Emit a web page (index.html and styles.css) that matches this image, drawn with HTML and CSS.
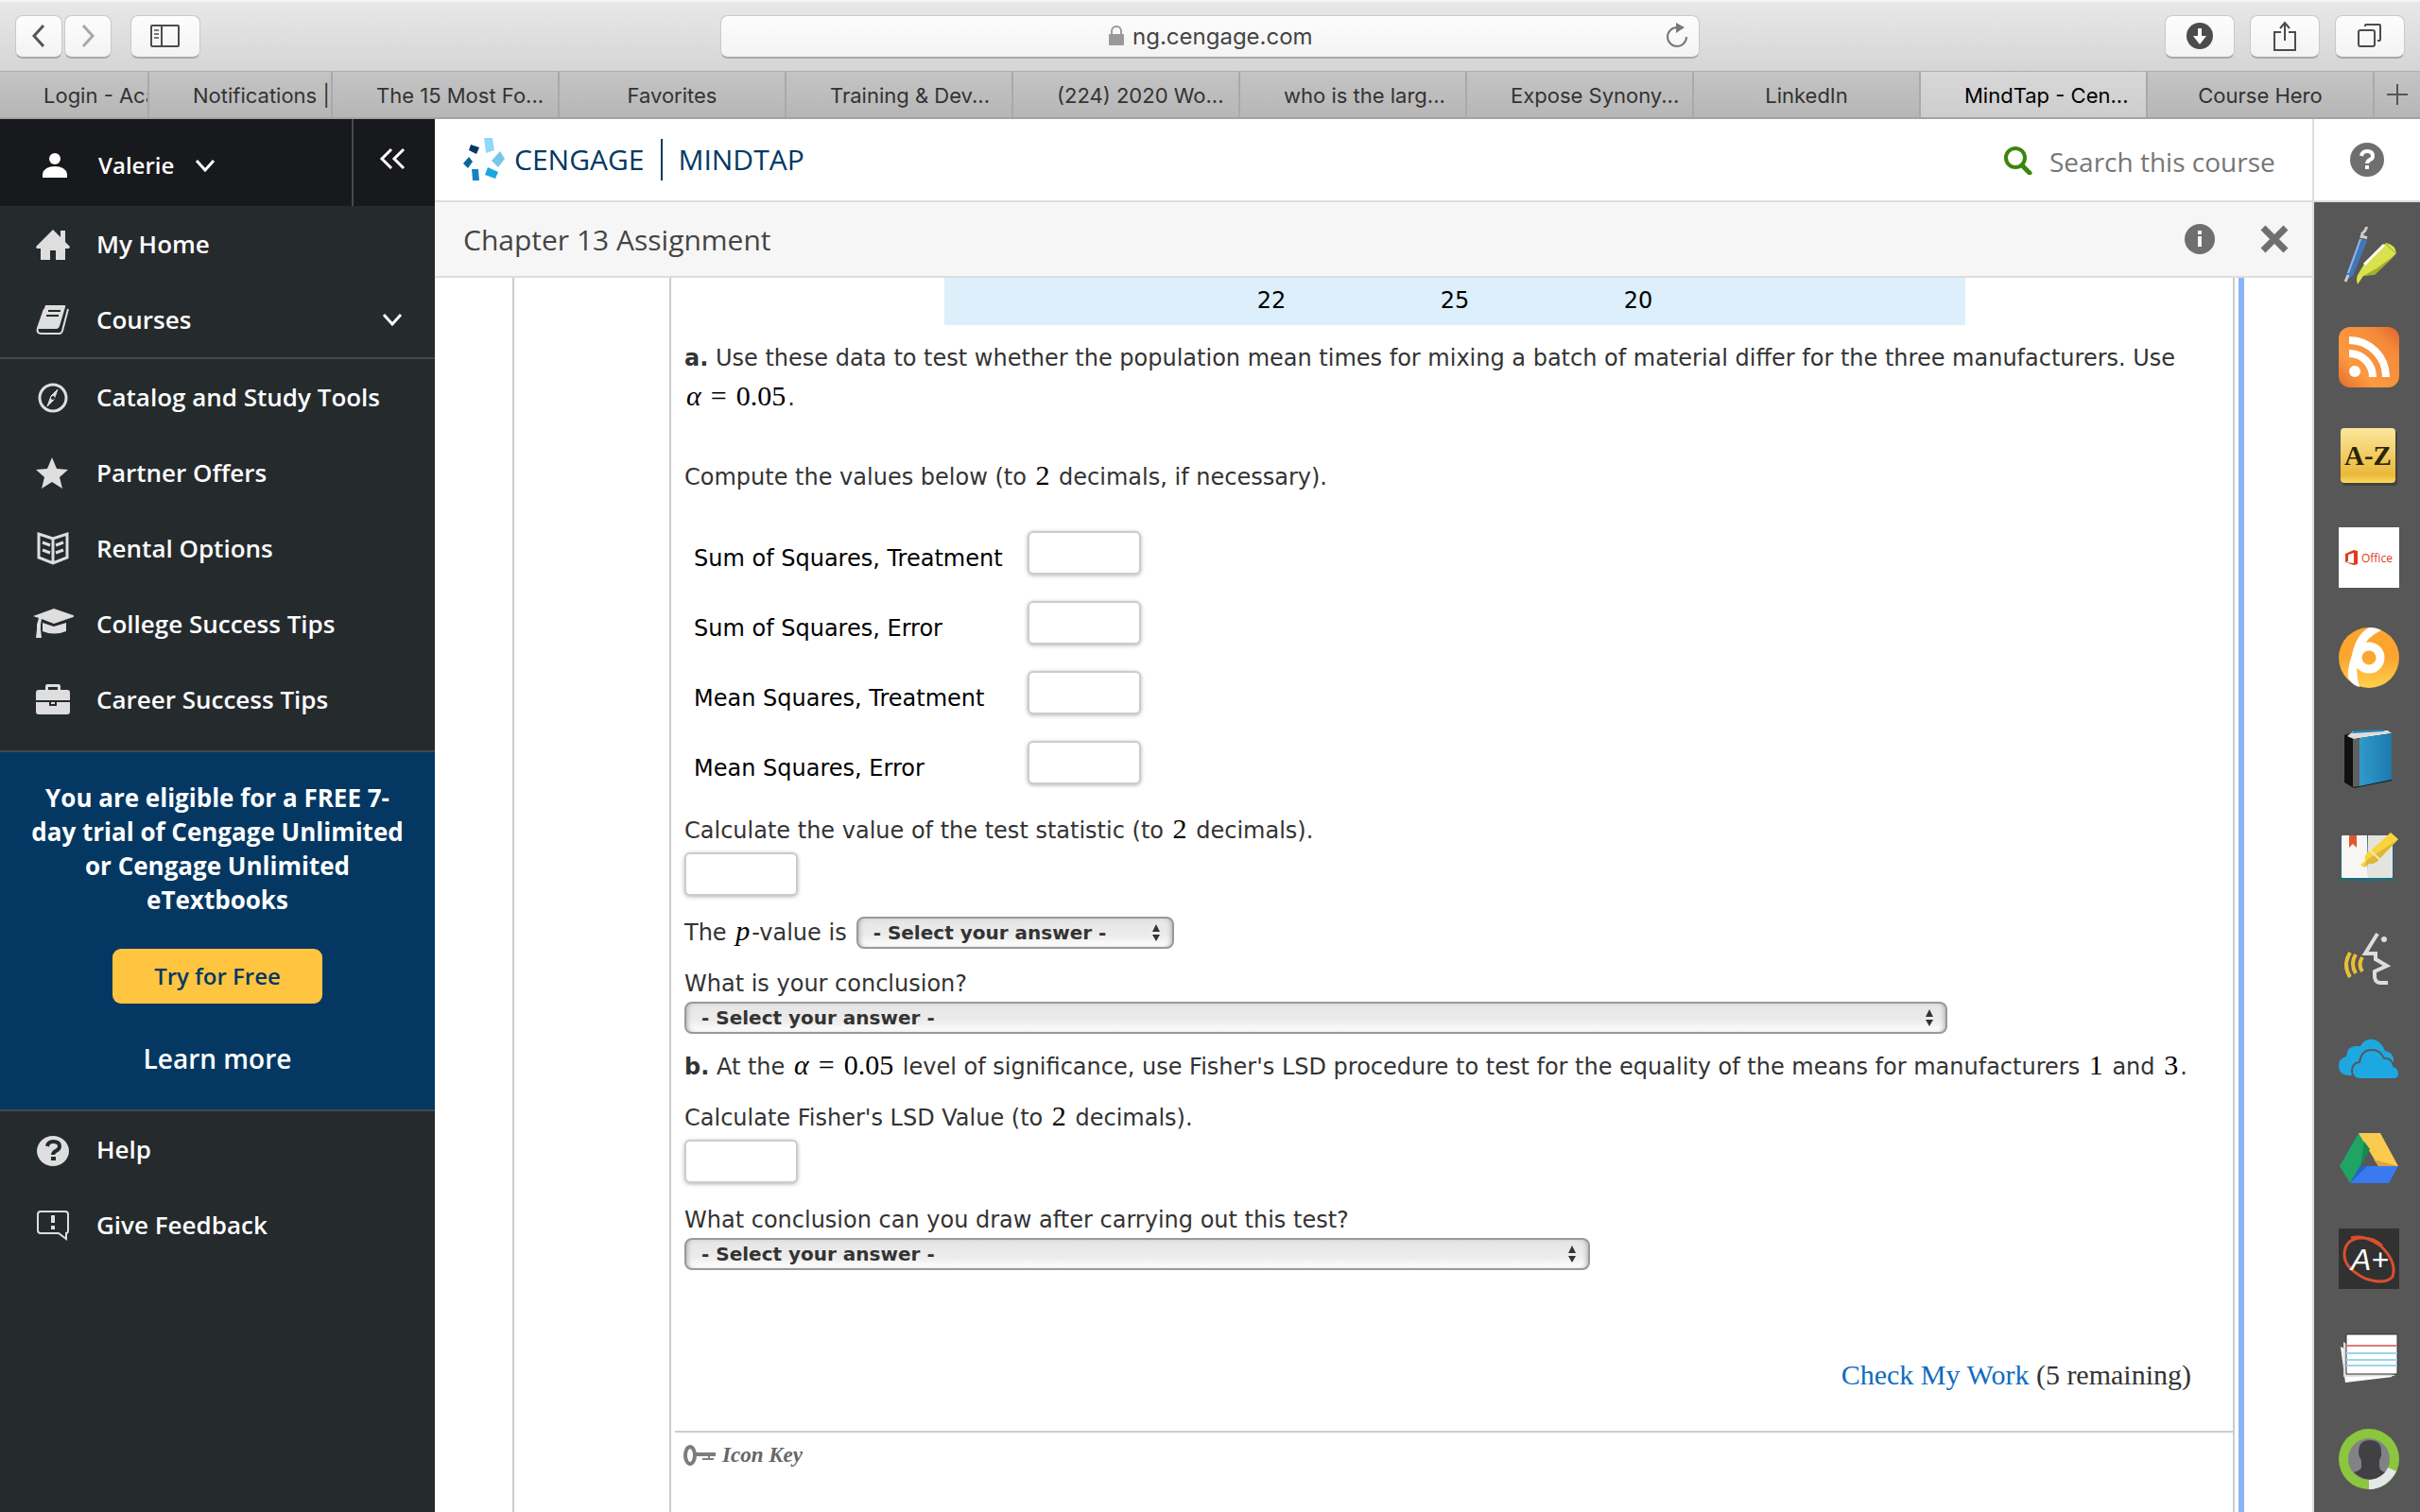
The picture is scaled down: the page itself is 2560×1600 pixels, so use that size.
FILE: index.html
```html
<!DOCTYPE html>
<html lang="en">
<head>
<meta charset="utf-8">
<title>MindTap - Cengage Learning</title>
<meta name="viewport" content="width=device-width, initial-scale=1">
<link rel="stylesheet" href="styles.css">
</head>
<body>
<div class="toolbar">
  <div class="tool-group">
    <button class="tool narrow" type="button" aria-label="Back"><svg width="18" height="28" viewBox="0 0 18 28"><path d="M14 3 4 14l10 11" fill="none" stroke="#555" stroke-width="3"/></svg></button>
    <button class="tool narrow" type="button" aria-label="Forward"><svg width="18" height="28" viewBox="0 0 18 28"><path d="M4 3l10 11L4 25" fill="none" stroke="#a8a8a8" stroke-width="3"/></svg></button>
    <button class="tool spaced" type="button" aria-label="Show sidebar"><svg width="32" height="26" viewBox="0 0 32 26"><rect x="1" y="2" width="29" height="22" rx="1" fill="none" stroke="#4c4c4c" stroke-width="2"/><path d="M12 2v22" stroke="#4c4c4c" stroke-width="2"/><path d="M4 7h5M4 11h5M4 15h5" stroke="#777" stroke-width="2"/></svg></button>
  </div>
  <form class="address">
    <svg width="18" height="22" viewBox="0 0 18 22"><path d="M4 10V6a5 5 0 0 1 10 0v4" fill="none" stroke="#999" stroke-width="2"/><rect x="1" y="9" width="16" height="12" rx="1" fill="#999"/></svg>
    <input class="url" type="text" value="ng.cengage.com" aria-label="Address">
    <button class="reload" type="button" aria-label="Reload"><svg width="26" height="28" viewBox="0 0 26 28"><path d="M13 5A10 10 0 1 0 23 15" fill="none" stroke="#777" stroke-width="2"/><path d="M12 0v11l9-6z" fill="#777"/></svg></button>
  </form>
  <div class="tool-group end">
    <button class="tool" type="button" aria-label="Downloads"><svg width="30" height="30" viewBox="0 0 30 30"><circle cx="15" cy="15" r="14" fill="#4c4c4c"/><path d="M13 7h4v8h5l-7 9-7-9h5z" fill="#fff"/></svg></button>
    <button class="tool" type="button" aria-label="Share"><svg width="26" height="34" viewBox="0 0 26 34"><path d="M9 13H2v19h22V13h-7M13 22V4M8 9l5-6 5 6" fill="none" stroke="#4c4c4c" stroke-width="2"/></svg></button>
    <button class="tool" type="button" aria-label="Show all tabs"><svg width="28" height="28" viewBox="0 0 28 28"><rect x="2" y="8" width="17" height="17" rx="2" fill="none" stroke="#4c4c4c" stroke-width="2"/><path d="M9 4V3q0-1 1-1h14q1 0 1 1v15q0 1-1 1h-2" fill="none" stroke="#4c4c4c" stroke-width="2"/></svg></button>
  </div>
</div>
<nav class="tabs" aria-label="Browser tabs">
  <a class="tab" href="#">Login - Aca</a>
  <a class="tab" href="#">Notifications |</a>
  <a class="tab" href="#">The 15 Most Fo...</a>
  <a class="tab centered" href="#">Favorites</a>
  <a class="tab" href="#">Training &amp; Dev...</a>
  <a class="tab" href="#">(224) 2020 Wo...</a>
  <a class="tab" href="#">who is the larg...</a>
  <a class="tab" href="#">Expose Synony...</a>
  <a class="tab centered" href="#">LinkedIn</a>
  <a class="tab active" href="#">MindTap - Cen...</a>
  <a class="tab centered" href="#">Course Hero</a>
  <button class="new-tab" type="button" aria-label="New tab"><svg width="24" height="24" viewBox="0 0 24 24"><path d="M12 1v22M1 12h22" stroke="#555" stroke-width="2"/></svg></button>
</nav>

<div class="app">
  <aside class="sidebar">
    <div class="user-bar">
      <button class="user" type="button">
        <svg class="user-icon" width="28" height="28" viewBox="0 0 28 28" fill="#fff"><circle cx="14" cy="7" r="6"/><path d="M1 27v-4q2-8 13-8t13 8v4z"/></svg>
        Valerie
        <svg width="22" height="14" viewBox="0 0 22 14"><path d="M2 2l9 10 9-10" fill="none" stroke="#fff" stroke-width="3"/></svg>
      </button>
      <button class="collapse" type="button" aria-label="Collapse menu"><svg width="28" height="24" viewBox="0 0 28 24"><path d="M13 2 3 12l10 10M26 2 16 12l10 10" fill="none" stroke="#fff" stroke-width="3"/></svg></button>
    </div>
    <nav class="menu menu-top">
      <a class="item" href="#"><svg class="icon" viewBox="0 0 44 40" fill="#dedede"><path d="M22 5 4 23l1 2h4v12h10V27h6v10h10V25h4l1-2-5-5V6h-5v7z"/></svg>My Home</a>
      <a class="item" href="#"><svg class="icon" viewBox="0 0 44 40"><path d="M14 5h20q2 0 1 2l-6 20q-1 3-3 3H6z" fill="#dedede"/><path d="M38 9l-6 23q-1 3-3 3H10q-6 0-4-6l7-20" fill="none" stroke="#dedede" stroke-width="2"/><path d="M17 11h13M15 16h13" stroke="#252a2d" stroke-width="2"/></svg>Courses<svg class="chev" width="22" height="14" viewBox="0 0 22 14"><path d="M2 2l9 10 9-10" fill="none" stroke="#fff" stroke-width="3"/></svg></a>
    </nav>
    <nav class="menu">
      <a class="item" href="#"><svg class="icon" viewBox="0 0 44 40"><circle cx="22" cy="21" r="14" fill="none" stroke="#dedede" stroke-width="3"/><path d="M27 12 20 19l-4 11 7-7z" fill="#dedede" stroke="#dedede"/><circle cx="22" cy="21" r="2" fill="#252a2d"/></svg>Catalog and Study Tools</a>
      <a class="item" href="#"><svg class="icon" viewBox="0 0 44 40" fill="#dedede"><path d="M21 4l5 12 12 1-9 8 3 12-11-7-11 7 3-12-9-8 12-1z"/></svg>Partner Offers</a>
      <a class="item" href="#"><svg class="icon" viewBox="0 0 44 40" fill="none" stroke="#dedede" stroke-width="3"><path d="M22 10 7 5v25l15 6 15-6V5zM22 10v26M11 14l8 3M11 22l8 3M33 14l-8 3M33 22l-8 3"/></svg>Rental Options</a>
      <a class="item" href="#"><svg class="icon" viewBox="0 0 44 40" fill="#dedede"><path d="M23 4 1 12l6 2-2 7v5l-1 9h6l-1-9V21l1-6 13 5 23-8zM11 19v9q12 5 25 0v-9l-13 4z"/></svg>College Success Tips</a>
      <a class="item" href="#"><svg class="icon" viewBox="0 0 44 40" fill="#dedede"><path d="M14 10V6q0-2 2-2h12q2 0 2 2v4h7q3 0 3 3v8H4v-8q0-3 3-3zm3 0h10V7H17zM4 23h14v4h8v-4h14v10q0 3-3 3H7q-3 0-3-3z"/><path d="M20 23h4v2h-4z"/></svg>Career Success Tips</a>
    </nav>
    <section class="promo">
      <p class="promo-text">You are eligible for a FREE 7-day trial of Cengage Unlimited or Cengage Unlimited eTextbooks</p>
      <button class="try" type="button">Try for Free</button>
      <a class="learn" href="#">Learn more</a>
    </section>
    <nav class="menu menu-bottom">
      <a class="item" href="#"><svg class="icon" viewBox="0 0 44 40"><ellipse cx="22" cy="22" rx="17" ry="16" fill="#dedede"/><path d="M16 17q1-5 6-5 7 0 7 5 0 3-4 5-3 2-3 4" fill="none" stroke="#252a2d" stroke-width="4"/><path d="M20 28h5v4h-5z" fill="#252a2d"/></svg>Help</a>
      <a class="item" href="#"><svg class="icon" viewBox="0 0 44 40"><path d="M9 6h26q3 0 3 3v17q0 3-2 3v6l-8-6H9q-3 0-3-3V9q0-3 3-3z" fill="none" stroke="#dedede" stroke-width="2"/><path d="M20 10h4v8h-4zM20 21h4v4h-4z" fill="#dedede"/></svg>Give Feedback</a>
    </nav>
  </aside>

  <main class="main">
    <header class="brand-bar">
      <a class="brand" href="#">
        <svg width="46" height="46" viewBox="0 0 46 46"><path d="M22 0h9l2 13-9 3z" fill="#8fd8f8"/><path d="m39 14 5 8-7 9-7-7z" fill="#79c6e8"/><path d="m26 31 11 5-3 7-11-4z" fill="#1ba8e0"/><path d="M9 33h7l1 12h-7z" fill="#1a80c4"/><path d="m6 20 4 5-5 7-5-5z" fill="#0a6699"/><path d="m8 7 9 3-3 7-8-4z" fill="#003865"/></svg>
        <span>CENGAGE</span><span class="brand-sub">MINDTAP</span>
      </a>
      <label class="search">
        <svg width="32" height="32" viewBox="0 0 32 32" fill="none" stroke="#3b860b"><circle cx="14" cy="14" r="10" stroke-width="4"/><path d="m21 22 8 8" stroke-width="5" stroke-linecap="round"/></svg>
        <input class="search-input" type="text" placeholder="Search this course" aria-label="Search this course">
      </label>
    </header>
    <header class="title-bar">
      <h1 class="title">Chapter 13 Assignment</h1>
      <button class="plain" type="button" aria-label="Information"><svg width="34" height="34" viewBox="0 0 34 34"><circle cx="17" cy="17" r="16" fill="#6f6f6f"/><path d="M15 8h4v4h-4zM15 14h4v11h-4z" fill="#f6f6f6"/></svg></button>
      <button class="plain" type="button" aria-label="Close"><svg width="32" height="32" viewBox="0 0 32 32"><path d="m4 4 24 24M28 4 4 28" stroke="#6f6f6f" stroke-width="7"/></svg></button>
    </header>
    <div class="pane">
      <div class="sheet">
        <article class="question">
          <table class="data"><tbody><tr><td></td><td>22</td><td>25</td><td>20</td><td></td></tr></tbody></table>
          <p><b>a.</b> Use these data to test whether the population mean times for mixing a batch of material differ for the three manufacturers. Use <span class="math"><i>α</i><span class="eq">=</span>0.05</span>.</p>
          <p class="spaced-par">Compute the values below (to <span class="math">2</span> decimals, if necessary).</p>
          <div class="answers">
            <label for="sst">Sum of Squares, Treatment</label><input class="box" id="sst" type="text">
            <label for="sse">Sum of Squares, Error</label><input class="box" id="sse" type="text">
            <label for="mst">Mean Squares, Treatment</label><input class="box" id="mst" type="text">
            <label for="mse">Mean Squares, Error</label><input class="box" id="mse" type="text">
          </div>
          <div class="field"><label for="stat">Calculate the value of the test statistic (to <span class="math">2</span> decimals).</label><input class="box" id="stat" type="text"></div>
          <div class="inline-field"><label for="pval">The <span class="math"><i>p</i></span>-value is</label><select class="pick short" id="pval"><option>- Select your answer -</option></select></div>
          <div class="field"><label for="concl">What is your conclusion?</label><select class="pick long" id="concl"><option>- Select your answer -</option></select></div>
          <p class="part-b"><b>b.</b> At the <span class="math"><i>α</i><span class="eq">=</span>0.05</span> level of significance, use Fisher's LSD procedure to test for the equality of the means for manufacturers <span class="math">1</span> and <span class="math">3</span>.</p>
          <div class="field"><label for="lsd">Calculate Fisher's LSD Value (to <span class="math">2</span> decimals).</label><input class="box" id="lsd" type="text"></div>
          <div class="field"><label for="after">What conclusion can you draw after carrying out this test?</label><select class="pick medium" id="after"><option>- Select your answer -</option></select></div>
          <p class="check"><a href="#">Check My Work</a> (5 remaining)</p>
          <footer class="key"><svg width="36" height="24" viewBox="0 0 36 24" fill="none" stroke="#7d7d7d"><ellipse cx="8" cy="12" rx="5" ry="9" stroke-width="4"/><path d="M13 11h22" stroke-width="4"/><path d="M28 11v6M21 16h12" stroke-width="2"/></svg>Icon Key</footer>
        </article>
      </div>
    </div>
  </main>

  <aside class="rail">
    <button class="help" type="button" aria-label="Help"><svg width="38" height="38" viewBox="0 0 38 38"><circle cx="19" cy="19" r="18" fill="#6f6f6f"/><path d="M13 15q1-5 6-5 6 0 6 5 0 3-3 4-3 2-3 4" fill="none" stroke="#fff" stroke-width="4"/><path d="M17 25h4v4h-4z" fill="#fff"/></svg></button>
    <nav class="apps">
      <a href="#" aria-label="Highlights"><svg class="app-icon" viewBox="0 0 64 64"><path d="m23 12 7 3-15 37-5 3-2-5z" fill="#3f78b8"/><path d="m23 13-13 36" stroke="#92b8e0" stroke-width="2"/><path d="m7 58 3-7M24 12l1-5 3-3 2-5M23 9l7 3" stroke="#ccc" stroke-width="3"/><path d="M50 17q10 2 11 11L38 50l-12 2-6 9q-2-6 0-10l6-10z" fill="#d8e24c"/><path d="M61 29 38 51l-12 1 14-8z" fill="#a5ad2f"/><path d="m27 40 21-21" stroke="#fff" stroke-width="3"/><path d="M50 18q5 6 11 10" fill="none" stroke="#98a02e" stroke-width="1"/></svg></a>
      <a href="#" aria-label="RSS"><svg class="app-icon" viewBox="0 0 64 64"><defs><linearGradient id="g1" x1="0" y1="1" x2="1" y2="0"><stop offset="0" stop-color="#e36a2c"/><stop offset=".3" stop-color="#fb9a40"/><stop offset=".75" stop-color="#f58b3a"/><stop offset="1" stop-color="#dd6230"/></linearGradient></defs><rect width="64" height="64" rx="12" fill="url(#g1)"/><circle cx="17" cy="47" r="6" fill="#fff"/><path d="M11 28a25 25 0 0 1 25 25M11 14a39 39 0 0 1 39 39" fill="none" stroke="#fff" stroke-width="8"/></svg></a>
      <a href="#" aria-label="Glossary"><svg class="app-icon" viewBox="0 0 64 64"><defs><linearGradient id="g2" x1="0" y1="0" x2="0" y2="1"><stop offset="0" stop-color="#fbe79c"/><stop offset=".7" stop-color="#eec14a"/><stop offset=".85" stop-color="#eab93c"/><stop offset="1" stop-color="#fbd95a"/></linearGradient></defs><rect x="4" y="4" width="58" height="58" rx="4" fill="#333" opacity=".6"/><rect x="2" y="1" width="58" height="58" rx="4" fill="url(#g2)"/><text class="az" x="31" y="40" text-anchor="middle">A-Z</text></svg></a>
      <a href="#" aria-label="Office"><svg class="app-icon" viewBox="0 0 64 64"><path d="M0 0h64v64H0z" fill="#fff"/><path d="m7 28 9-4 4 1v14l-4 1-9-3 9 1V27l-6 2v7l-3 1z" fill="#e03c1a"/><text class="office" x="24" y="37">Office</text></svg></a>
      <a href="#" aria-label="Pathbrite"><svg class="app-icon" viewBox="0 0 64 64"><defs><linearGradient id="g3" x1="0" y1="0" x2="0" y2="1"><stop offset=".5" stop-color="#fba52f"/><stop offset="1" stop-color="#ffd04c"/></linearGradient></defs><circle cx="32" cy="32" r="32" fill="url(#g3)"/><path d="M32 0q8 0 13 3Q29 10 23 26q-7 20-1 37-8-2-12-10-1-10 4-24Q18 8 32 0z" fill="#fff"/><circle cx="32" cy="32" r="12" fill="none" stroke="#fff" stroke-width="9"/></svg></a>
      <a href="#" aria-label="Book"><svg class="app-icon" viewBox="0 0 64 64"><defs><linearGradient id="g4"><stop offset="0" stop-color="#2f9bcb"/><stop offset="1" stop-color="#1d79ad"/></linearGradient></defs><path d="m6 8 12-4 34-1 4 4v49l-40 8L6 58z" fill="#111"/><path d="m9 9 6-5 37-1 4 3-40 6z" fill="#ddd"/><path d="m13 6 5-3 30-1v2z" fill="#2380b0"/><path d="M15 12h7v50l-7 1z" fill="#606060"/><path d="m22 11 34-5v49l-34 7z" fill="url(#g4)"/></svg></a>
      <a href="#" aria-label="Notes"><svg class="app-icon" viewBox="0 0 64 64"><path d="M2 9h56v47H34l-3 3-3-3H2z" fill="#236a78"/><path d="M4 8h26l1 45H4q-1 0-1-1V9z" fill="#f8f6f3"/><path d="M31 8h26v44q0 1-1 1H31z" fill="#e3e4de"/><path d="M11 8h8v13l-4-4-4 4z" fill="#e0572f"/><path d="m55 5 8 7-20 21q-4 6-11 5l-5 4-4-3 5-4q-2-8 6-11z" fill="#fad43d"/><path d="m63 12-20 21q-4 6-11 5l-5 4 3-8z" fill="#dcb73a"/><path d="m32 23 12 11" stroke="#f3e9b0" stroke-width="2"/></svg></a>
      <a href="#" aria-label="Read aloud"><svg class="app-icon" viewBox="0 0 64 64" fill="none" stroke-width="4"><path d="M41 6 28 27h11v6l12 7-13 6v6q1 6 6 6h8" stroke="#ddd"/><circle cx="48" cy="12" r="3" fill="#ddd" stroke="none"/><path d="M12 26q-8 13 0 26M18 28q-6 10 0 20M25 31q-5 8 0 15" stroke="#e9bf35" stroke-width="4"/></svg></a>
      <a href="#" aria-label="OneDrive"><svg class="app-icon" viewBox="0 0 64 64"><path d="M10 50q-10-1-10-10 0-8 8-10 1-11 10-11h5Q28 10 37 12q8 2 12 12 10 2 9 12l-20 14z" fill="#1ea8e1"/><path d="M22 54q-8-1-8-9 0-8 8-9 2-13 13-13 9 0 13 9 8-1 10 8 6 2 6 8 0 6-6 6z" fill="#1ea8e1" stroke="#575757" stroke-width="2"/></svg></a>
      <a href="#" aria-label="Drive"><svg class="app-icon" viewBox="0 0 64 64"><path d="M21 5 1 40l11 18 21-36z" fill="#1fa463"/><path d="M21 5h23l19 35H42z" fill="#fbcb50"/><path d="M23 40h40L53 58H12z" fill="#3a7af0"/><path d="m23 40 10-18-6-8" fill="#168a4f"/><path d="m63 40-26-7 5 7z" fill="#dba637"/><path d="m12 58 18-18h-7z" fill="#2561c7"/></svg></a>
      <a href="#" aria-label="Grades"><svg class="app-icon" viewBox="0 0 64 64"><path d="M0 0h64v64H0z" fill="#313131"/><path d="M13 10Q27 6 44 18q18 17 13 33-8 9-29 2Q6 42 6 28q0-16 16-18 14-1 24 8" fill="none" stroke="#d9502d" stroke-width="3"/><text class="aplus" x="33" y="44" text-anchor="middle">A+</text></svg></a>
      <a href="#" aria-label="Flashcards"><svg class="app-icon" viewBox="0 0 64 64"><path d="m2 19 5 38 50-6z" fill="#fff"/><path d="M5 14v37l55-1" fill="#ddd"/><path d="M8 6h54v42H8z" fill="#fff" stroke="#333" stroke-width="1"/><path d="M8 18h54" stroke="#e37a7a" stroke-width="2"/><path d="M8 26h54M8 33h54M8 39h54" stroke="#9bd5ee" stroke-width="2"/></svg></a>
      <a href="#" aria-label="Profile"><svg class="app-icon" viewBox="0 0 64 64"><circle cx="32" cy="32" r="32" fill="#8bc63f"/><path d="M32 32v32q18 0 29-19z" fill="#e6e7e8"/><circle cx="32" cy="32" r="22" fill="#808285"/><path d="M21 25q0-13 12-13 12 0 12 12 1 4-2 9v7q0 4 6 6-16 15-33 0 7-2 8-5v-7q-3-5-3-9z" fill="#414042"/></svg></a>
    </nav>
  </aside>
</div>
</body>
</html>
```
FILE: styles.css
```css
* { box-sizing: border-box; }
body {
  margin: 0;
  height: 100vh;
  display: flex;
  flex-direction: column;
  overflow: hidden;
  background: #fff;
  color: #333;
  font-family: "Open Sans", "Noto Sans", sans-serif;
}
p, h1 { margin: 0; }
a { text-decoration: none; }
svg { flex: none; display: block; }
button { font: inherit; border: 0; padding: 0; background: none; color: inherit; }

/* Browser toolbar */
.toolbar {
  flex: none;
  height: 75px;
  padding: 0 16px;
  display: grid;
  grid-template-columns: 1fr minmax(300px, 1036px) 1fr;
  align-items: center;
  background: linear-gradient(#e8e8e8, #d5d5d5);
  border-top: 2px solid #f5f5f5;
  font-family: Inter, "Liberation Sans", sans-serif;
}
.tool-group { display: flex; gap: 2px; }
.tool-group.end { justify-content: flex-end; gap: 16px; }
.tool, .address {
  height: 46px;
  border-radius: 8px;
  background: linear-gradient(#fdfdfd, #f3f3f3);
  border: 1px solid #c9c9c9;
  border-bottom: 2px solid #a9a9a9;
}
.tool { width: 74px; display: flex; align-items: center; justify-content: center; }
.tool.narrow { width: 50px; }
.tool.spaced { margin-left: 18px; }
.address {
  display: grid;
  grid-template-columns: 1fr 18px 190px 1fr;
  gap: 8px;
  align-items: center;
  margin: 0;
}
.address > svg { grid-column: 2; }
.url { width: 100%; padding: 2px 0 0; border: 0; background: none; font: 24px/32px Inter, "Liberation Sans", sans-serif; color: #444; }
.reload { justify-self: end; margin-right: 10px; }

/* Tab strip */
.tabs {
  flex: none;
  height: 51px;
  display: grid;
  grid-template-columns: 158px 194px repeat(9, minmax(0, 1fr)) 48px;
  background: linear-gradient(#c4c4c4, #b6b6b6);
  border-top: 1px solid #adadad;
  border-bottom: 2px solid #a3a3a3;
  font: 22px/50px Inter, "Liberation Sans", sans-serif;
}
.tab {
  padding-left: 46px;
  border-right: 2px solid #a9a9a9;
  color: #333;
  white-space: nowrap;
  overflow: hidden;
}
.tab.centered { padding-left: 0; text-align: center; }
.tab.active { background: linear-gradient(#d8d8d8, #cdcdcd); color: #000; }
.new-tab { display: flex; align-items: center; justify-content: center; }

/* Application frame */
.app { flex: 1; min-height: 0; display: flex; }
.sidebar {
  flex: 0 0 460px;
  display: flex;
  flex-direction: column;
  background: #252a2d;
  color: #fff;
  font-size: 26px;
  font-weight: 600;
  line-height: 36px;
}
.user-bar { flex: none; height: 92px; display: flex; background: #18191d; }
.user {
  flex: 1;
  display: flex;
  align-items: center;
  gap: 22px;
  padding: 6px 0 0 44px;
  border-right: 2px solid #45484c;
  font-size: 24px;
}
.user-icon { margin-right: 10px; }
.collapse { width: 86px; display: flex; justify-content: center; align-items: center; padding: 0 4px 8px 0; }
.menu { display: flex; flex-direction: column; border-bottom: 2px solid #45484c; padding-bottom: 14px; }
.item { height: 80px; display: flex; align-items: center; gap: 24px; padding-left: 34px; color: #fff; }
.icon { width: 44px; height: 40px; }
.chev { margin: 0 34px 0 auto; }
.menu-top { padding-bottom: 0; }
.menu-bottom { border: 0; padding: 0; }
.promo {
  display: flex;
  flex-direction: column;
  align-items: center;
  padding: 30px 28px 36px;
  background: #043862;
  border-bottom: 2px solid #45484c;
}
.promo-text { text-align: center; font-weight: 700; }
.try {
  width: 222px;
  height: 58px;
  margin: 34px 0 40px;
  border-radius: 9px;
  background: #ffc540;
  color: #043862;
  font-size: 24px;
}
.learn { color: #fff; font-size: 28px; }

.main { flex: 1; min-width: 0; display: flex; flex-direction: column; }
.brand-bar {
  flex: none;
  height: 88px;
  display: flex;
  align-items: center;
  justify-content: space-between;
  padding: 0 38px 0 30px;
  border-bottom: 2px solid #ddd;
}
.brand { display: flex; align-items: center; gap: 8px; color: #003865; font-size: 30px; line-height: 44px; }
.brand-sub { border-left: 2px solid #003865; margin-left: 10px; padding-left: 16px; }
.search { display: flex; align-items: center; gap: 18px; }
.search-input { width: 240px; border: 0; padding: 4px 0 0; font: 28px/40px "Open Sans", sans-serif; color: #767676; background: none; }
.search-input::placeholder { color: #767676; opacity: 1; }
.title-bar {
  flex: none;
  height: 80px;
  display: flex;
  align-items: center;
  gap: 46px;
  padding: 0 24px 0 30px;
  background: #f6f6f6;
  border-bottom: 2px solid #ddd;
}
.title { flex: 1; padding-top: 2px; font-size: 30px; line-height: 44px; font-weight: 400; color: #444; }

/* Assignment content */
.pane { flex: 1; min-height: 0; display: flex; overflow: hidden; padding: 0 72px 0 82px; }
.sheet { flex: 1; display: flex; padding: 0 4px 0 164px; border-left: 2px solid #ccc; border-right: 6px solid #8ab4f8; }
.question {
  flex: 1;
  padding: 0 14px;
  border-left: 2px solid #ccc;
  border-right: 2px solid #ccc;
  font: 24px/42px "DejaVu Sans", sans-serif;
}
.math { padding: 0 2px; font-family: "Liberation Serif", serif; font-size: 30px; line-height: 30px; color: #000; }
.eq { padding: 0 10px; }
.data { width: 1080px; height: 50px; margin: 0 0 14px 275px; border-collapse: collapse; table-layout: fixed; background: #dceffb; color: #000; }
.data td { width: 194px; padding: 0 0 2px; text-align: center; }
.data td:first-child { width: 249px; }
.data td:last-child { width: auto; }
.spaced-par { margin-top: 42px; }
.answers {
  display: grid;
  grid-template-columns: max-content max-content;
  grid-auto-rows: 46px;
  gap: 28px 26px;
  margin: 36px 10px 28px;
  color: #000;
}
.answers label { padding-top: 8px; }
.box {
  display: block;
  width: 120px;
  height: 46px;
  padding: 0 8px;
  border: 2px solid #ccc;
  border-radius: 6px;
  background: #fff;
  box-shadow: 0 1px 4px rgba(0, 0, 0, .3);
  font: inherit;
}
.field label { display: block; }
.field .box { margin: 2px 0 18px; }
.inline-field { display: flex; align-items: center; gap: 10px; margin-bottom: 12px; }
.pick {
  appearance: none;
  display: block;
  max-width: 100%;
  height: 34px;
  padding: 0 36px 0 16px;
  border: 2px solid #999;
  border-radius: 8px;
  background:
    url("data:image/svg+xml,%3Csvg xmlns='http://www.w3.org/2000/svg' width='10' height='18'%3E%3Cpath d='M5 0l4 8H1zM5 18l4-7H1z' fill='%23333'/%3E%3C/svg%3E") right 12px center no-repeat,
    linear-gradient(#e5e5e5, #ececec 60%, #fff);
  box-shadow: inset 4px 0 5px -3px #aaa, inset -4px 0 5px -3px #aaa;
  color: #333;
  font: bold 20px/30px "DejaVu Sans", sans-serif;
}
.field .pick { margin-top: -2px; }
.short { width: 336px; }
.long { width: 1336px; }
.medium { width: 958px; }
.part-b { margin: 14px 0 12px; }
.check {
  margin: 90px 30px 0 0;
  text-align: right;
  font-family: "Liberation Serif", serif;
  font-size: 30px;
}
.check a { color: #0f6cbf; }
.key {
  display: flex;
  align-items: center;
  gap: 6px;
  margin: 38px -14px 0 -10px;
  padding: 4px 8px;
  border-top: 2px solid #ccc;
  color: #666;
  font: italic bold 23px/40px "Liberation Serif", serif;
}

/* Right rail */
.rail { flex: 0 0 114px; display: flex; flex-direction: column; border-left: 2px solid #ddd; background: #575757; }
.help { flex: none; height: 88px; display: flex; align-items: center; justify-content: center; background: #fff; border-bottom: 2px solid #ddd; }
.apps { display: flex; flex-direction: column; align-items: center; gap: 42px; padding: 26px 0 0 4px; }
.app-icon { width: 64px; height: 64px; }
.az { font: bold 29px "Liberation Serif", serif; fill: #2b2509; }
.office { font: 12px "Open Sans", sans-serif; fill: #e03c1a; }
.aplus { font: italic 32px "Liberation Sans", sans-serif; fill: #fff; }
```
